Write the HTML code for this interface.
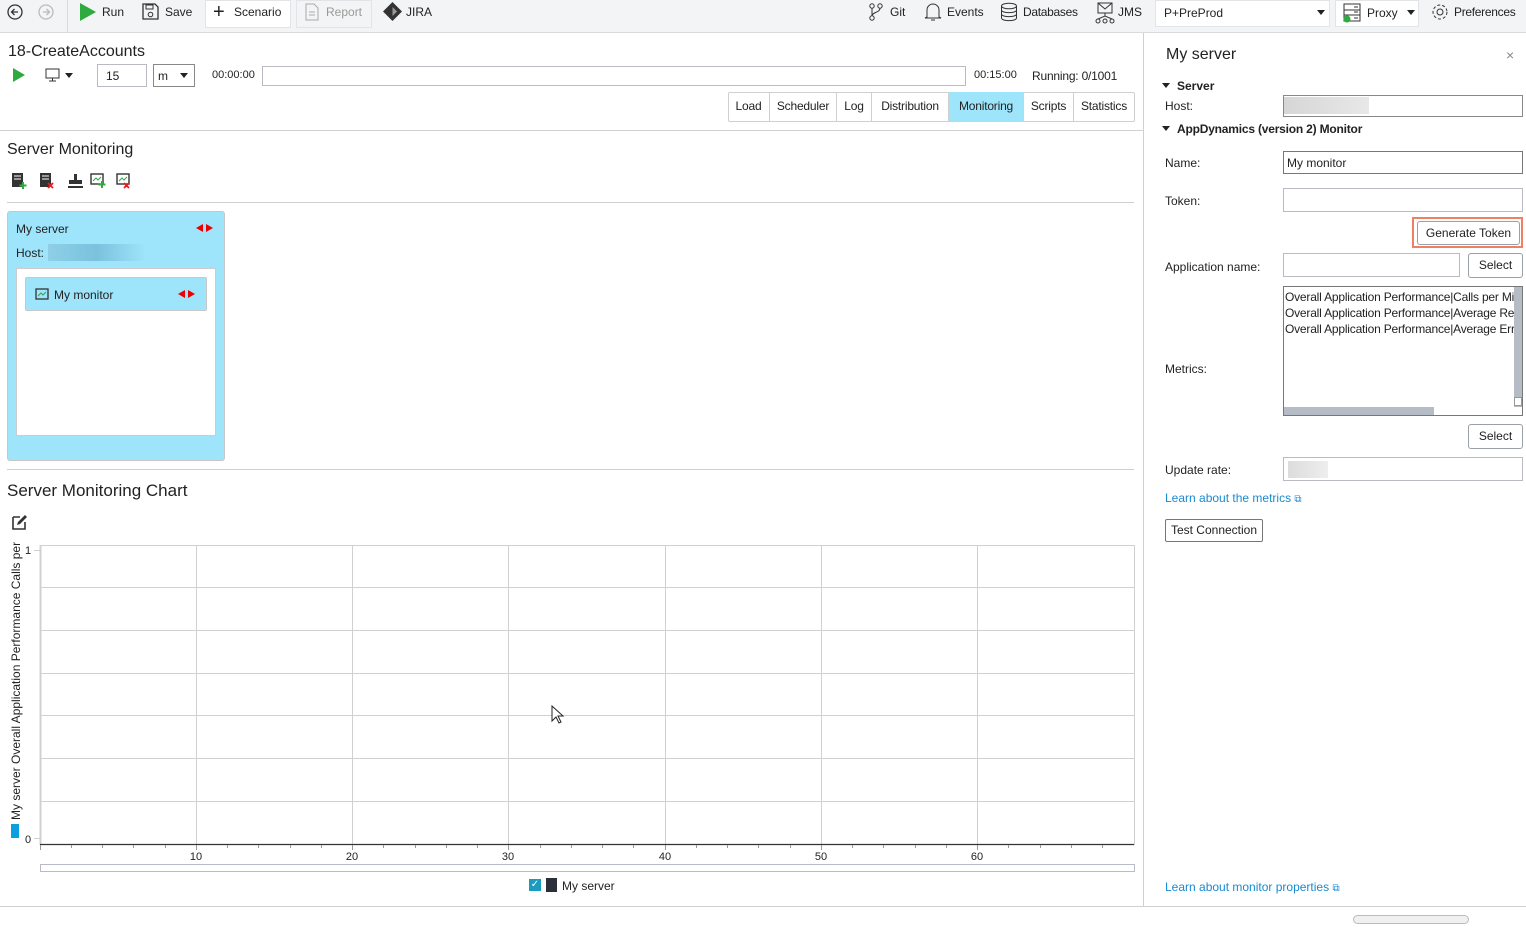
<!DOCTYPE html>
<html><head><meta charset="utf-8">
<style>
*{box-sizing:border-box;margin:0;padding:0}
body{width:1526px;height:933px;position:relative;background:#fff;font-family:"Liberation Sans",sans-serif;font-size:12px;color:#222;overflow:hidden}
.a{position:absolute;white-space:nowrap}
.tb{position:absolute;left:0;top:0;width:1526px;height:33px;background:#f3f4f6;border-bottom:1px solid #d8dadd}
.inp{position:absolute;background:#fff;border:1px solid #b8bcc2}
.btn{position:absolute;background:#fff;border:1px solid #9aa0a6;border-radius:3px;text-align:center;line-height:22px}
.tab{position:absolute;top:92px;height:30px;line-height:29px;text-align:center;border-left:1px solid #d0d0d0;letter-spacing:-0.2px}
.lbl{position:absolute;left:1165px}
.link{color:#1a8ad0}
.tri{position:absolute;width:0;height:0;border-left:4px solid transparent;border-right:4px solid transparent;border-top:5px solid #222}
</style></head><body>
<div class="tb"></div>
<svg class="a" style="left:6px;top:4px" width="50" height="18" viewBox="0 0 50 18">
<circle cx="9" cy="8" r="7" fill="none" stroke="#333" stroke-width="1.3"/><path d="M12 8H6M8.5 5L5.5 8l3 3" fill="none" stroke="#333" stroke-width="1.3"/>
<circle cx="40" cy="8" r="7" fill="none" stroke="#bbb" stroke-width="1.3"/><path d="M37 8h6M40.5 5l3 3-3 3" fill="none" stroke="#bbb" stroke-width="1.3"/></svg>
<div class="a" style="left:67px;top:0;width:1px;height:32px;background:#d8dadd"></div>
<svg class="a" style="left:80px;top:3px" width="16" height="18"><path d="M0 0L16 9 0 18z" fill="#2eaa3f"/></svg>
<div class="a" style="left:102px;top:5px">Run</div>
<svg class="a" style="left:142px;top:3px" width="17" height="17"><path d="M1 1h12l3 3v12H1z" fill="none" stroke="#333" stroke-width="1.3"/><rect x="4" y="2" width="7" height="4" fill="none" stroke="#333"/><circle cx="8.5" cy="11.5" r="2.3" fill="none" stroke="#333"/></svg>
<div class="a" style="left:165px;top:5px">Save</div>
<div class="a" style="left:205px;top:0;width:86px;height:28px;background:#fff;border:1px solid #e2e4e7"></div>
<div class="a" style="left:213px;top:0px;font-size:20px;line-height:24px">+</div>
<div class="a" style="left:234px;top:5px">Scenario</div>
<div class="a" style="left:296px;top:0;width:76px;height:28px;background:#f3f4f6;border:1px solid #e2e4e7"></div>
<svg class="a" style="left:305px;top:3px" width="14" height="18"><path d="M1 1h8l4 4v12H1z" fill="none" stroke="#aaa"/><path d="M4 9h6M4 12h6" stroke="#aaa"/></svg>
<div class="a" style="left:326px;top:5px;color:#999">Report</div>
<svg class="a" style="left:383px;top:2px" width="19" height="19"><path d="M9.5 0L19 9.5 9.5 19 0 9.5z" fill="#333"/><path d="M9.5 5L14 9.5 9.5 14z" fill="#999"/></svg>
<div class="a" style="left:406px;top:5px">JIRA</div>
<svg class="a" style="left:868px;top:3px" width="16" height="18"><circle cx="4" cy="3" r="2.2" fill="none" stroke="#333"/><circle cx="4" cy="15" r="2.2" fill="none" stroke="#333"/><circle cx="12" cy="3" r="2.2" fill="none" stroke="#333"/><path d="M4 5v8M12 5c0 5-8 4-8 8" fill="none" stroke="#333"/></svg>
<div class="a" style="left:890px;top:5px">Git</div>
<svg class="a" style="left:924px;top:2px" width="18" height="20"><path d="M3 15V8a6 6 0 0 1 12 0v7l2 1H1z" fill="none" stroke="#333"/><path d="M7 18h4" stroke="#333"/></svg>
<div class="a" style="left:947px;top:5px">Events</div>
<svg class="a" style="left:1000px;top:2px" width="18" height="20"><ellipse cx="9" cy="4" rx="7.5" ry="2.8" fill="none" stroke="#333"/><path d="M1.5 4v12c0 3.5 15 3.5 15 0V4M1.5 8c0 3.5 15 3.5 15 0M1.5 12c0 3.5 15 3.5 15 0" fill="none" stroke="#333"/></svg>
<div class="a" style="left:1023px;top:5px;letter-spacing:-0.3px">Databases</div>
<svg class="a" style="left:1095px;top:2px" width="20" height="22"><rect x="3" y="1" width="14" height="10" fill="none" stroke="#333"/><path d="M3 1l7 6 7-6M10 11v3M3 17l7-3 7 3" fill="none" stroke="#333"/><circle cx="3" cy="19" r="2" fill="none" stroke="#333"/><circle cx="10" cy="19" r="2" fill="none" stroke="#333"/><circle cx="17" cy="19" r="2" fill="none" stroke="#333"/></svg>
<div class="a" style="left:1118px;top:5px">JMS</div>
<div class="a" style="left:1155px;top:0;width:175px;height:27px;background:#fff;border:1px solid #e2e4e7"></div>
<div class="a" style="left:1164px;top:6px">P+PreProd</div>
<div class="tri" style="left:1317px;top:10px"></div>
<div class="a" style="left:1335px;top:0;width:84px;height:27px;background:#fff;border:1px solid #e2e4e7"></div>
<svg class="a" style="left:1342px;top:3px" width="20" height="20"><rect x="2" y="1" width="16" height="17" fill="none" stroke="#333"/><path d="M2 7h16M2 12h16M12 4h4M12 9h4M12 15h4" stroke="#333"/><circle cx="5" cy="16" r="3.5" fill="#2eaa3f"/></svg>
<div class="a" style="left:1367px;top:6px">Proxy</div>
<div class="tri" style="left:1407px;top:10px"></div>
<svg class="a" style="left:1431px;top:3px" width="18" height="18"><circle cx="9" cy="9" r="3" fill="none" stroke="#333"/><circle cx="9" cy="9" r="7" fill="none" stroke="#333" stroke-dasharray="3 2"/></svg>
<div class="a" style="left:1454px;top:5px;letter-spacing:-0.3px">Preferences</div>

<div class="a" style="left:8px;top:43px;font-size:16px">18-CreateAccounts</div>
<svg class="a" style="left:13px;top:68px" width="12" height="14"><path d="M0 0L12 7 0 14z" fill="#2eaa3f"/></svg>
<svg class="a" style="left:45px;top:68px" width="16" height="14"><rect x="1" y="1" width="13" height="9" fill="none" stroke="#333"/><path d="M7.5 10v3M4 13h7" stroke="#333"/></svg>
<div class="tri" style="left:65px;top:73px"></div>
<div class="inp" style="left:97px;top:64px;width:50px;height:23px"></div>
<div class="a" style="left:106px;top:69px">15</div>
<div class="inp" style="left:153px;top:64px;width:42px;height:23px;border-color:#888"></div>
<div class="a" style="left:158px;top:69px">m</div>
<div class="tri" style="left:180px;top:73px"></div>
<div class="a" style="left:212px;top:69px;font-size:11px">00:00:00</div>
<div class="inp" style="left:262px;top:66px;width:704px;height:20px"></div>
<div class="a" style="left:974px;top:69px;font-size:11px">00:15:00</div>
<div class="a" style="left:1032px;top:69px;letter-spacing:-0.2px">Running: 0/1001</div>
<div class="a" style="left:728px;top:92px;width:407px;height:30px;border:1px solid #d0d0d0;border-radius:2px"></div>
<div class="tab" style="left:728px;width:41px;border-left:none">Load</div>
<div class="tab" style="left:769px;width:67px">Scheduler</div>
<div class="tab" style="left:836px;width:35px">Log</div>
<div class="tab" style="left:871px;width:77px">Distribution</div>
<div class="tab" style="left:948px;width:75px;background:#9ee4fb">Monitoring</div>
<div class="tab" style="left:1023px;width:50px">Scripts</div>
<div class="tab" style="left:1073px;width:61px">Statistics</div>
<div class="a" style="left:0;top:130px;width:1143px;height:1px;background:#d0d0d0"></div>

<div class="a" style="left:7px;top:141px;font-size:16px">Server Monitoring</div>
<svg class="a" style="left:11px;top:172px" width="124" height="17">
<rect x="1" y="1" width="11" height="14" fill="#333"/><path d="M3 4h7M3 7h7" stroke="#fff"/><path d="M12 10v7M8.5 13.5h7" stroke="#2eaa3f" stroke-width="2"/>
<rect x="29" y="1" width="11" height="14" fill="#333"/><path d="M31 4h7M31 7h7" stroke="#fff"/><path d="M37 11l5 5M42 11l-5 5" stroke="#d22" stroke-width="1.8"/>
<path d="M58 8h5v-6h3v6h5v4H58zM57 14h15v2H57z" fill="#333"/>
<rect x="80" y="2" width="12" height="10" fill="none" stroke="#333" stroke-width="1.4"/><path d="M82 9l3-3 2 2 3-3" stroke="#2eaa3f" fill="none"/><path d="M91 9v7M87.5 12.5h7" stroke="#2eaa3f" stroke-width="2"/>
<rect x="106" y="2" width="12" height="10" fill="none" stroke="#333" stroke-width="1.4"/><path d="M108 9l3-3 2 2 3-3" stroke="#2eaa3f" fill="none"/><path d="M113 11l5 5M118 11l-5 5" stroke="#d22" stroke-width="1.8"/></svg>
<div class="a" style="left:7px;top:202px;width:1127px;height:1px;background:#d0d0d0"></div>
<div class="a" style="left:7px;top:211px;width:218px;height:250px;background:#9ee4fb;border:1px solid #c8c8c8;border-radius:3px"></div>
<div class="a" style="left:16px;top:222px">My server</div>
<svg class="a" style="left:196px;top:224px" width="17" height="8"><path d="M0 4L7 0v8zM17 4L10 0v8z" fill="#e00"/></svg>
<div class="a" style="left:16px;top:246px">Host:</div>
<div class="a" style="left:48px;top:244px;width:98px;height:17px;background:linear-gradient(90deg,#8ecfe6,#7ac2de 50%,#9ee4fb)"></div>
<div class="a" style="left:16px;top:268px;width:200px;height:168px;background:#fff;border:1px solid #ccc"></div>
<div class="a" style="left:25px;top:277px;width:182px;height:34px;background:#9ee4fb;border:1px solid #c8c8c8;border-radius:2px"></div>
<svg class="a" style="left:35px;top:288px" width="14" height="12"><rect x="1" y="1" width="12" height="10" fill="none" stroke="#333" stroke-width="1.3"/><path d="M3 8l3-3 2 2 3-3" stroke="#2eaa3f" fill="none"/></svg>
<div class="a" style="left:54px;top:288px">My monitor</div>
<svg class="a" style="left:178px;top:290px" width="17" height="8"><path d="M0 4L7 0v8zM17 4L10 0v8z" fill="#e00"/></svg>
<div class="a" style="left:7px;top:469px;width:1127px;height:1px;background:#d0d0d0"></div>
<div class="a" style="left:7px;top:481px;font-size:17px">Server Monitoring Chart</div>
<svg class="a" style="left:12px;top:514px" width="16" height="16"><path d="M1 3h7M1 3v12h12V8" fill="none" stroke="#333" stroke-width="1.6"/><path d="M5 11l1-3 7-7 2 2-7 7z" fill="#333"/></svg>

<svg class="a" style="left:0;top:540px" width="1140" height="340">
<g stroke="#d0d0d0" stroke-width="1">
<path d="M40 5.5H1134M40 47.5H1134M40 90.5H1134M40 133.5H1134M40 175.5H1134M40 218.5H1134M40 261.5H1134"/>
<path d="M196.5 5V305M352.5 5V305M508.5 5V305M665.5 5V305M821.5 5V305M977.5 5V305M1134.5 5V305"/>
<path d="M40.5 5V305" stroke-width="2"/>
<path d="M34 10.5h6M34 298.5h6"/>
</g>
<path d="M40 304.5H1134" stroke="#333" stroke-width="1.3"/>
<g stroke="#999"><path d="M40.5 305v5M71.5 305v3M102.5 305v3M133.5 305v3M165.5 305v3M196.5 305v5M227.5 305v3M258.5 305v3M290.5 305v3M321.5 305v3M352.5 305v5M383.5 305v3M415.5 305v3M446.5 305v3M477.5 305v3M508.5 305v5M540.5 305v3M571.5 305v3M602.5 305v3M633.5 305v3M665.5 305v5M696.5 305v3M727.5 305v3M758.5 305v3M790.5 305v3M821.5 305v5M852.5 305v3M883.5 305v3M915.5 305v3M946.5 305v3M977.5 305v5M1008.5 305v3M1040.5 305v3M1071.5 305v3M1102.5 305v3"/></g>
<g font-family="Liberation Sans" font-size="11" fill="#222" text-anchor="middle">
<text x="196" y="320">10</text><text x="352" y="320">20</text><text x="508" y="320">30</text><text x="665" y="320">40</text><text x="821" y="320">50</text><text x="977" y="320">60</text>
<text x="28" y="14">1</text><text x="28" y="303">0</text></g>
<rect x="40.5" y="324.5" width="1094" height="7" fill="none" stroke="#b8bcc8"/>
<rect x="11" y="284" width="8" height="14" fill="#0aa0e0"/>
<text transform="translate(20 280) rotate(-90)" font-family="Liberation Sans" font-size="12" fill="#222">My server Overall Application Performance Calls per</text>
</svg>
<div class="a" style="left:529px;top:879px;width:12px;height:12px;background:#1a9bbf;color:#fff;font-size:10px;line-height:12px;text-align:center">✓</div>
<div class="a" style="left:546px;top:878px;width:11px;height:14px;background:#2a2f3a"></div>
<div class="a" style="left:562px;top:879px">My server</div>
<svg class="a" style="left:551px;top:705px" width="14" height="20"><path d="M1 1v15l4-4 3 6 2-1-3-6h5z" fill="#fff" stroke="#222"/></svg>
<div class="a" style="left:0;top:906px;width:1526px;height:1px;background:#d0d0d0"></div>
<div class="a" style="left:1353px;top:915px;width:116px;height:9px;border:1px solid #bbb;border-radius:5px;background:#f0f0f0"></div>

<div class="a" style="left:1143px;top:33px;width:1px;height:874px;background:#d0d0d0"></div>
<div class="a" style="left:1166px;top:46px;font-size:16px">My server</div>
<div class="a" style="left:1506px;top:47px;font-size:14px;color:#888">×</div>
<div class="tri" style="left:1162px;top:83px"></div>
<div class="a" style="left:1177px;top:79px;font-weight:bold">Server</div>
<div class="lbl" style="top:99px">Host:</div>
<div class="inp" style="left:1283px;top:95px;width:240px;height:22px;border-color:#888"></div>
<div class="a" style="left:1284px;top:97px;width:85px;height:17px;background:linear-gradient(90deg,#d6d6d6,#e8e8e8)"></div>
<div class="tri" style="left:1162px;top:126px"></div>
<div class="a" style="left:1177px;top:122px;font-weight:bold;letter-spacing:-0.2px">AppDynamics (version 2) Monitor</div>
<div class="lbl" style="top:156px">Name:</div>
<div class="inp" style="left:1283px;top:151px;width:240px;height:23px;border-color:#777"></div>
<div class="a" style="left:1287px;top:156px">My monitor</div>
<div class="lbl" style="top:194px">Token:</div>
<div class="inp" style="left:1283px;top:188px;width:240px;height:24px"></div>
<div class="a" style="left:1412px;top:217px;width:111px;height:31px;border:2px solid #ef8060"></div>
<div class="btn" style="left:1417px;top:221px;width:103px;height:24px">Generate Token</div>
<div class="lbl" style="top:260px">Application name:</div>
<div class="inp" style="left:1283px;top:253px;width:177px;height:24px"></div>
<div class="btn" style="left:1468px;top:253px;width:55px;height:25px">Select</div>
<div class="a" style="left:1283px;top:286px;width:240px;height:130px;border:1px solid #777;background:#fff;overflow:hidden"></div>
<div class="a" style="left:1285px;top:289px;width:229px;overflow:hidden;line-height:16px;letter-spacing:-0.2px">Overall Application Performance|Calls per Minute<br>Overall Application Performance|Average Response<br>Overall Application Performance|Average Errors</div>
<div class="a" style="left:1514px;top:287px;width:8px;height:120px;background:#b6bcc6"></div>
<div class="a" style="left:1514px;top:397px;width:8px;height:9px;background:#fff;border:1px solid #999"></div>
<div class="a" style="left:1284px;top:407px;width:150px;height:8px;background:#b6bcc6"></div>
<div class="lbl" style="top:362px">Metrics:</div>
<div class="btn" style="left:1468px;top:424px;width:55px;height:25px">Select</div>
<div class="lbl" style="top:463px">Update rate:</div>
<div class="inp" style="left:1283px;top:457px;width:240px;height:24px"></div>
<div class="a" style="left:1288px;top:461px;width:40px;height:17px;background:linear-gradient(90deg,#dcdcdc,#eee)"></div>
<div class="lbl link" style="top:491px">Learn about the metrics <span style="font-size:10px">⧉</span></div>
<div class="btn" style="left:1165px;top:519px;width:98px;height:23px;border-color:#777;border-radius:2px;line-height:21px">Test Connection</div>
<div class="lbl link" style="top:880px">Learn about monitor properties <span style="font-size:10px">⧉</span></div>
</body></html>
